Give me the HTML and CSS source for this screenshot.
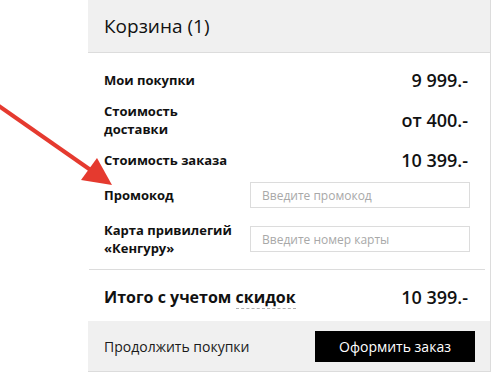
FILE: index.html
```html
<!DOCTYPE html>
<html lang="ru">
<head>
    <meta charset="UTF-8">
    <meta name="viewport" content="width=device-width, initial-scale=1.0">
    <title>Корзина</title>
    <link rel="stylesheet" href="styles.css">
</head>
<body>
    <div class="cart">
        <div class="cart_head">
            <h2>Корзина <span class="count">(1)</span></h2>
        </div>
        <div class="summary">
            <div class="rows">
                <div class="row">
                    <span class="label">Мои покупки</span>
                    <span class="value">9 999.-</span>
                </div>
                <div class="row">
                    <span class="label">Стоимость доставки</span>
                    <span class="value">от 400.-</span>
                </div>
                <div class="row">
                    <span class="label">Стоимость заказа</span>
                    <span class="value">10 399.-</span>
                </div>
                <div class="row">
                    <label class="label" for="promo">Промокод</label>
                    <input type="text" id="promo" placeholder="Введите промокод">
                </div>
                <div class="row card_row">
                    <label class="label" for="card">Карта привилегий «Кенгуру»</label>
                    <input type="text" id="card" placeholder="Введите номер карты">
                </div>
            </div>
        </div>
        <div class="total">
            <span class="total_label">Итого с учетом <span class="dashed">скидок</span></span>
            <span class="value">10 399.-</span>
        </div>
        <div class="cart_foot">
            <a href="#" class="continue">Продолжить покупки</a>
            <button type="submit" class="order_but">Оформить заказ</button>
        </div>
    </div>
    <svg class="arrow" width="130" height="200" viewBox="0 0 130 200">
        <line x1="-4" y1="104" x2="92" y2="171" stroke="#e53a2f" stroke-width="4"/>
        <polygon points="112,185 81,180 97,158" fill="#e53a2f"/>
    </svg>
</body>
</html>
```

FILE: styles.css
```css
body {
    margin: 0;
    font-family: "Open Sans", "DejaVu Sans", sans-serif;
    color: #111;
    background-color: white;
}
.cart {
    margin-left: 88px;
    width: 402px;
    border-right: 1px solid #dcdcdc;
}
.cart_head {
    height: 52px;
    background-color: #f0f0f0;
    border-bottom: 1px solid #dcdcdc;
    display: flex;
    align-items: center;
    padding-left: 16px;
}
.cart_head h2 {
    margin: 0;
    font-size: 19px;
    font-weight: 400;
}
.summary {
    margin: 0 5px 0 1px;
    padding: 14px 15px 12px 15px;
    border-bottom: 1px solid #dcdcdc;
}
.rows {
    display: flex;
    flex-direction: column;
    gap: 9px;
}
.row {
    display: grid;
    grid-template-columns: 146px 1fr;
    align-items: center;
    min-height: 26px;
}
.card_row {
    margin-top: 4px;
}
.label {
    max-width: 130px;
    font-size: 13px;
    font-weight: 700;
    line-height: 18px;
}
.value {
    text-align: right;
    font-size: 18px;
    font-weight: 600;
    line-height: 26px;
    padding-right: 2px;
}
.row input {
    height: 26px;
    box-sizing: border-box;
    border: 1px solid #dcdcdc;
    padding: 0 11px;
    font-family: inherit;
    font-size: 12px;
    color: #333;
    outline: none;
}
.row input::placeholder {
    color: #a8a8a8;
}
.total {
    display: flex;
    justify-content: space-between;
    align-items: center;
    padding: 14px 22px 11px 16px;
}
.total_label {
    font-size: 16px;
    font-weight: 700;
    line-height: 26px;
}
.dashed {
    border-bottom: 1px dashed #b0b0b0;
}
.total .value {
    padding-right: 0;
}
.cart_foot {
    height: 50px;
    background-color: #f0f0f0;
    border-bottom: 1px solid #dcdcdc;
    display: flex;
    justify-content: space-between;
    align-items: center;
    padding: 0 15px 0 16px;
}
.continue {
    color: #1a1a1a;
    font-size: 14px;
    text-decoration: none;
}
.order_but {
    width: 160px;
    height: 31px;
    border: 0;
    background-color: #000;
    color: white;
    font-family: inherit;
    font-size: 14px;
    cursor: pointer;
}
.arrow {
    position: absolute;
    top: 0;
    left: 0;
}
```
